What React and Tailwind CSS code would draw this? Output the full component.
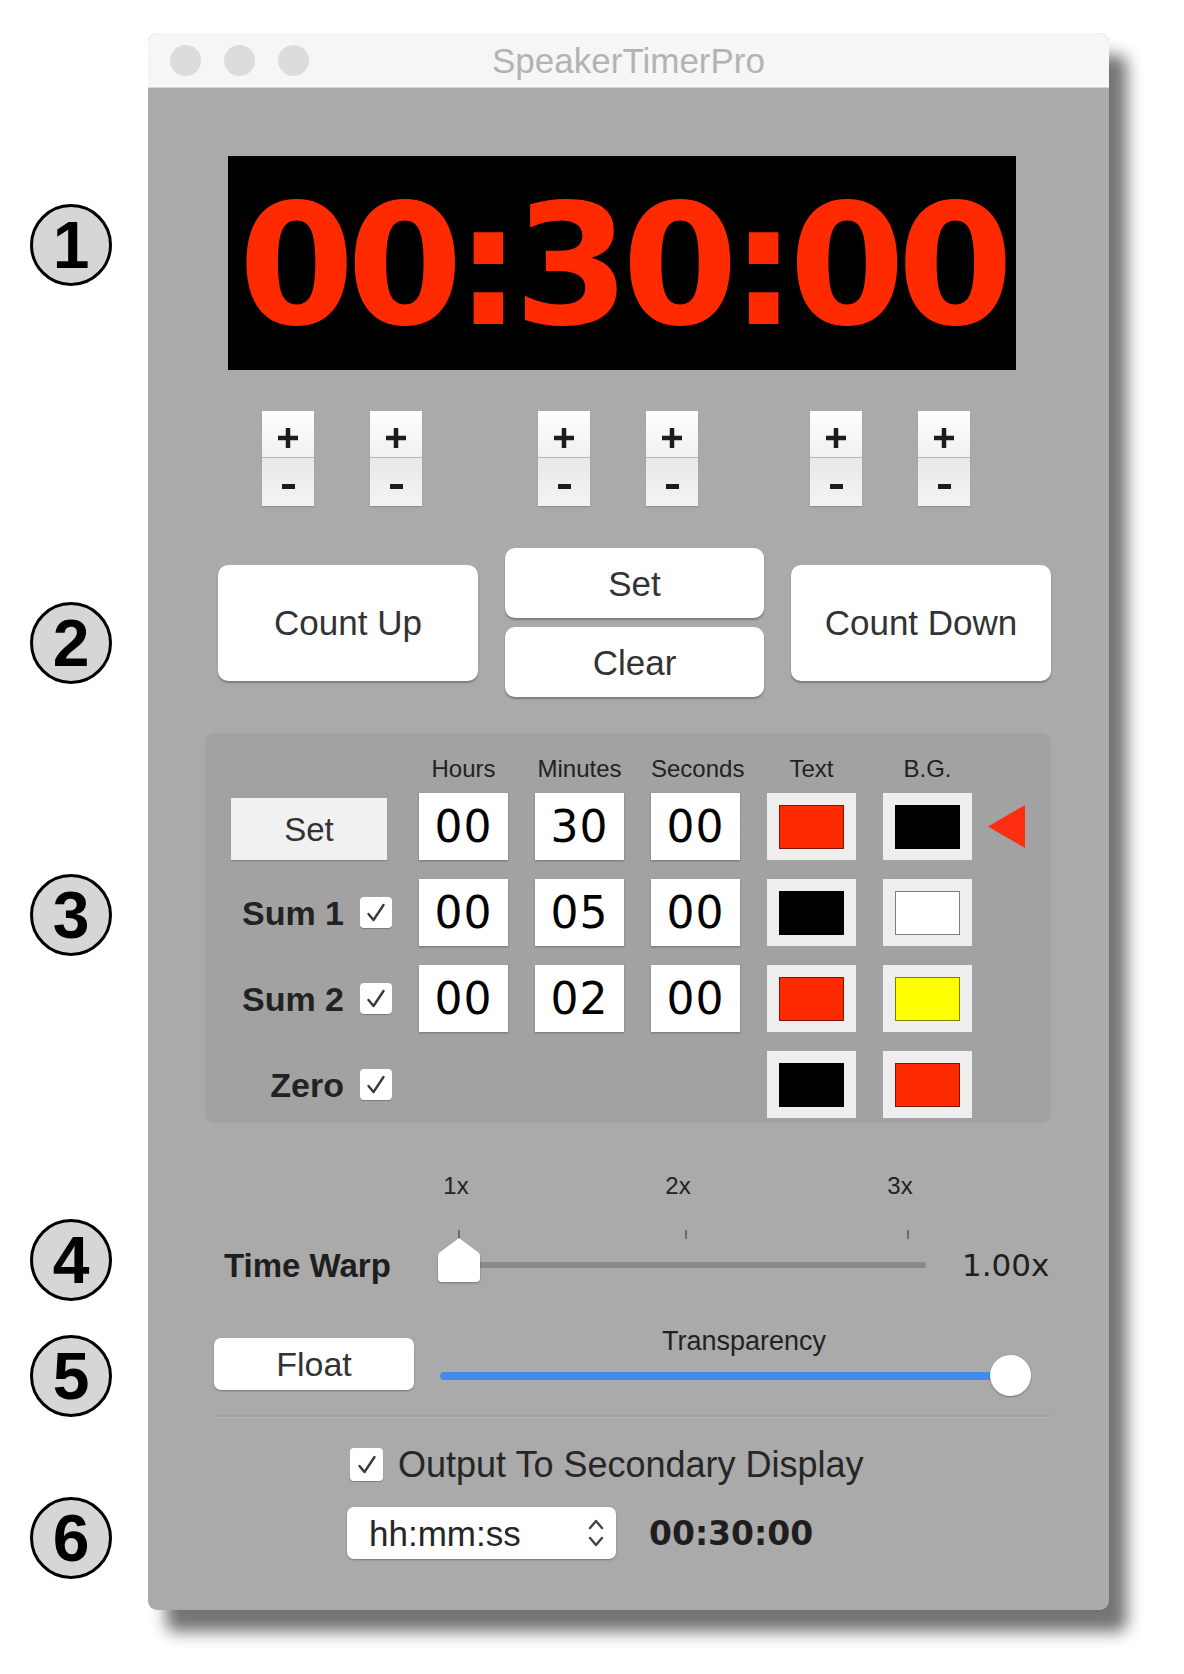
import React from 'react';

// circled callout numbers on the left edge
const Callout = ({ n, className }) => (
  <div
    className={`${className} w-[82px] h-[82px] shrink-0 rounded-full border-[3px] border-black bg-[#d6d6d6] flex items-center justify-center`}
  >
    <span className="font-['Liberation_Sans',Arial,sans-serif] font-bold text-[66px] leading-none text-black">
      {n}
    </span>
  </div>
);

const Stepper = ({ className = '' }) => (
  <div className={`${className} w-[52px] h-[95px] flex flex-col shadow-[0_1px_1px_rgba(0,0,0,0.15)]`}>
    <div className="h-[47px] bg-linear-to-b from-[#fdfdfd] to-[#f1f1f1] border-b border-[#b5b5b5] flex items-center justify-center pt-[8px]">
      <svg width="22" height="22" viewBox="0 0 22 22">
        <path d="M11 1v20M1 11h20" stroke="#1c1c1c" strokeWidth="4.5" />
      </svg>
    </div>
    <div className="flex-1 bg-linear-to-b from-[#e9e9e9] to-[#f3f3f3] flex items-center justify-center pt-[8px]">
      <div className="w-[13px] h-[5px] bg-[#1c1c1c]" />
    </div>
  </div>
);

const BigButton = ({ children, className = '' }) => (
  <div
    className={`${className} bg-white rounded-[10px] shadow-[0_2px_2px_rgba(0,0,0,0.28)] flex items-center justify-center font-['Liberation_Sans',Arial,sans-serif] text-[35px] leading-none text-[#333]`}
  >
    {children}
  </div>
);

const Check = ({ className = '' }) => (
  <div className={`${className} w-[32px] h-[31px] bg-white rounded-[4px] shadow-[0_1px_1px_rgba(0,0,0,0.25)] flex items-center justify-center`}>
    <svg width="22" height="22" viewBox="0 0 22 22">
      <path d="M3.5 12l5 6L18.5 3" fill="none" stroke="#3a3a3a" strokeWidth="2.4" strokeLinecap="round" strokeLinejoin="round" />
    </svg>
  </div>
);

const NumBox = ({ value }) => (
  <div className="w-[89px] h-[67px] bg-white shadow-[0_1px_2px_rgba(0,0,0,0.3)] flex items-center justify-center font-['DejaVu_Sans',sans-serif] text-[44px] leading-none tracking-[1px] text-black">
    {value}
  </div>
);

const Well = ({ color }) => (
  <div className="w-[89px] h-[67px] bg-[#eeeeee] flex items-center justify-center">
    <div className="w-[65px] h-[44px] border border-[rgba(0,0,0,0.5)]" style={{ backgroundColor: color }} />
  </div>
);

const RowLabel = ({ text }) => (
  <div className="flex items-center justify-end h-[67px]">
    <span className="font-['Liberation_Sans',Arial,sans-serif] font-bold text-[34px] leading-none text-[#222]">{text}</span>
    <Check className="ml-[16px]" />
  </div>
);

const rows = [
  { label: 'Sum 1', h: '00', m: '05', s: '00', text: '#000000', bg: '#ffffff' },
  { label: 'Sum 2', h: '00', m: '02', s: '00', text: '#ff2a00', bg: '#ffff00' },
];

export default function App() {
  return (
    <div className="w-[1184px] h-[1674px] bg-white flex font-['Liberation_Sans',Arial,sans-serif]">
      {/* callouts */}
      <div className="w-[148px] pl-[30px] flex flex-col">
        <Callout n="1" className="mt-[204px]" />
        <Callout n="2" className="mt-[316px]" />
        <Callout n="3" className="mt-[190px]" />
        <Callout n="4" className="mt-[263px]" />
        <Callout n="5" className="mt-[34px]" />
        <Callout n="6" className="mt-[80px]" />
      </div>

      {/* window */}
      <div className="mt-[33px] w-[961px] h-[1577px] rounded-[9px] bg-[#aaaaaa] shadow-[18px_22px_16px_rgba(0,0,0,0.55)] flex flex-col overflow-hidden">
        {/* title bar */}
        <div className="h-[55px] shrink-0 bg-[#f6f6f6] border-b border-[#d6d6d6] grid grid-cols-[1fr_auto_1fr] items-center">
          <div className="flex pl-[22px] gap-[23px]">
            <div className="w-[31px] h-[31px] rounded-full bg-[#dcdcdc]" />
            <div className="w-[31px] h-[31px] rounded-full bg-[#dcdcdc]" />
            <div className="w-[31px] h-[31px] rounded-full bg-[#dcdcdc]" />
          </div>
          <div className="text-[35px] leading-none text-[#b3b3b3]">SpeakerTimerPro</div>
          <div />
        </div>

        {/* 1: timer display */}
        <div className="mt-[68px] ml-[80px] w-[788px] h-[214px] bg-black flex items-center justify-center">
          <span className="font-['DejaVu_Sans',sans-serif] font-bold text-[167px] leading-none tracking-[-8px] text-[#ff2a00] pt-[6px]">
            00:30:00
          </span>
        </div>

        {/* steppers */}
        <div className="mt-[41px] flex pl-[114px]">
          <Stepper />
          <Stepper className="ml-[56px]" />
          <Stepper className="ml-[116px]" />
          <Stepper className="ml-[56px]" />
          <Stepper className="ml-[112px]" />
          <Stepper className="ml-[56px]" />
        </div>

        {/* 2: count buttons */}
        <div className="mt-[42px] flex items-center pl-[70px] gap-[27px]">
          <BigButton className="w-[260px] h-[116px]">Count Up</BigButton>
          <div className="w-[259px] flex flex-col gap-[9px]">
            <BigButton className="h-[70px]">Set</BigButton>
            <BigButton className="h-[70px]">Clear</BigButton>
          </div>
          <BigButton className="w-[260px] h-[116px]">Count Down</BigButton>
        </div>

        {/* 3: presets panel */}
        <div className="mt-[36px] ml-[57px] w-[846px] h-[390px] shrink-0 rounded-[10px] bg-[#a2a2a2] pt-[22px] pl-[26px]">
          <div className="grid grid-cols-[161px_89px_89px_89px_89px_89px] gap-x-[27px] h-[28px] items-center text-center text-[24px] leading-[28px] text-[#222]">
            <div />
            <div>Hours</div>
            <div>Minutes</div>
            <div>Seconds</div>
            <div>Text</div>
            <div>B.G.</div>
          </div>
          <div className="mt-[10px] grid grid-cols-[161px_89px_89px_89px_89px_89px_40px] gap-x-[27px] gap-y-[19px] items-center">
            <div className="h-[67px] flex items-end">
              <div className="w-[156px] h-[62px] bg-[#f1f1f1] shadow-[0_1px_1px_rgba(0,0,0,0.2)] flex items-center justify-center text-[33px] leading-none text-[#333]">
                Set
              </div>
            </div>
            <NumBox value="00" />
            <NumBox value="30" />
            <NumBox value="00" />
            <Well color="#ff2a00" />
            <Well color="#000000" />
            <svg className="-ml-[11px]" width="38" height="43" viewBox="0 0 38 43">
              <path d="M0 21.5L37 0v43z" fill="#ff2d12" />
            </svg>

            {rows.map((r) => (
              <React.Fragment key={r.label}>
                <RowLabel text={r.label} />
                <NumBox value={r.h} />
                <NumBox value={r.m} />
                <NumBox value={r.s} />
                <Well color={r.text} />
                <Well color={r.bg} />
                <div />
              </React.Fragment>
            ))}

            <RowLabel text="Zero" />
            <div />
            <div />
            <div />
            <Well color="#000000" />
            <Well color="#ff2a00" />
            <div />
          </div>
        </div>

        {/* 4: time warp */}
        <div className="mt-[51px] flex pl-[288px] gap-[182px]">
          {['1x', '2x', '3x'].map((t) => (
            <div key={t} className="w-[40px] text-center text-[24px] leading-[24px] text-[#222]">
              {t}
            </div>
          ))}
        </div>
        <div className="mt-[44px] flex items-center h-[46px] pl-[76px]">
          <div className="w-[214px] font-bold text-[33px] leading-none text-[#1e1e1e]">Time Warp</div>
          <div className="relative w-[488px] h-[46px]">
            <div className="absolute left-[4px] top-[20px] w-[484px] h-[6px] rounded-full bg-[#8a8a8a]" />
            <div className="absolute left-[20px] top-[-12px] w-[2px] h-[9px] bg-[#6c6c6c]" />
            <div className="absolute left-[247px] top-[-12px] w-[2px] h-[9px] bg-[#6c6c6c]" />
            <div className="absolute left-[469px] top-[-12px] w-[2px] h-[9px] bg-[#6c6c6c]" />
            <svg className="absolute left-0 top-[-5px] drop-shadow-[0_1px_1px_rgba(0,0,0,0.3)]" width="42" height="46" viewBox="0 0 42 46">
              <path d="M21 1L40.5 15.5Q42 16.8 42 19V41Q42 45 38 45H4Q0 45 0 41V19Q0 16.8 1.5 15.5Z" fill="#ffffff" />
            </svg>
          </div>
          <div className="ml-[36px] font-['DejaVu_Sans',sans-serif] text-[31px] leading-none text-[#1e1e1e]">1.00x</div>
        </div>

        {/* 5: float + transparency */}
        <div className="mt-[42px] flex items-start pl-[66px]">
          <div className="mt-[8px] w-[200px] h-[52px] rounded-[7px] bg-white shadow-[0_1px_2px_rgba(0,0,0,0.3)] flex items-center justify-center text-[34px] leading-none text-[#333]">
            Float
          </div>
          <div className="ml-[26px] w-[608px] flex flex-col">
            <div className="h-[22px] leading-[22px] text-center text-[27px] text-[#222]">Transparency</div>
            <div className="relative h-[43px]">
              <div className="absolute left-0 top-[20px] w-[574px] h-[8px] rounded-full bg-[#3f8cec]" />
              <div className="absolute left-[550px] top-[3px] w-[41px] h-[41px] rounded-full bg-white shadow-[0_1px_2px_rgba(0,0,0,0.3)]" />
            </div>
          </div>
        </div>

        {/* separator */}
        <div className="mt-[20px] ml-[66px] w-[837px] border-t-2 border-[#a0a0a0] shadow-[0_1px_0_rgba(255,255,255,0.15)]" />

        {/* 6: secondary output */}
        <div className="mt-[31px] flex items-center h-[33px] pl-[202px]">
          <Check className="w-[33px] h-[33px]" />
          <span className="ml-[15px] text-[36px] leading-none text-[#262626]">Output To Secondary Display</span>
        </div>
        <div className="mt-[26px] flex items-center h-[52px] pl-[199px]">
          <div className="w-[269px] h-[52px] rounded-[7px] bg-white shadow-[0_1px_2px_rgba(0,0,0,0.3)] flex items-center justify-between pl-[22px] pr-[10px]">
            <span className="text-[35px] leading-none text-[#262626]">hh:mm:ss</span>
            <svg width="20" height="32" viewBox="0 0 20 32">
              <path d="M4 11l6-7 6 7M4 21l6 7 6-7" fill="none" stroke="#444" strokeWidth="2.4" strokeLinecap="round" strokeLinejoin="round" />
            </svg>
          </div>
          <span className="ml-[33px] font-['DejaVu_Sans',sans-serif] font-bold text-[33px] leading-none text-[#1e1e1e]">00:30:00</span>
        </div>
      </div>
    </div>
  );
}
